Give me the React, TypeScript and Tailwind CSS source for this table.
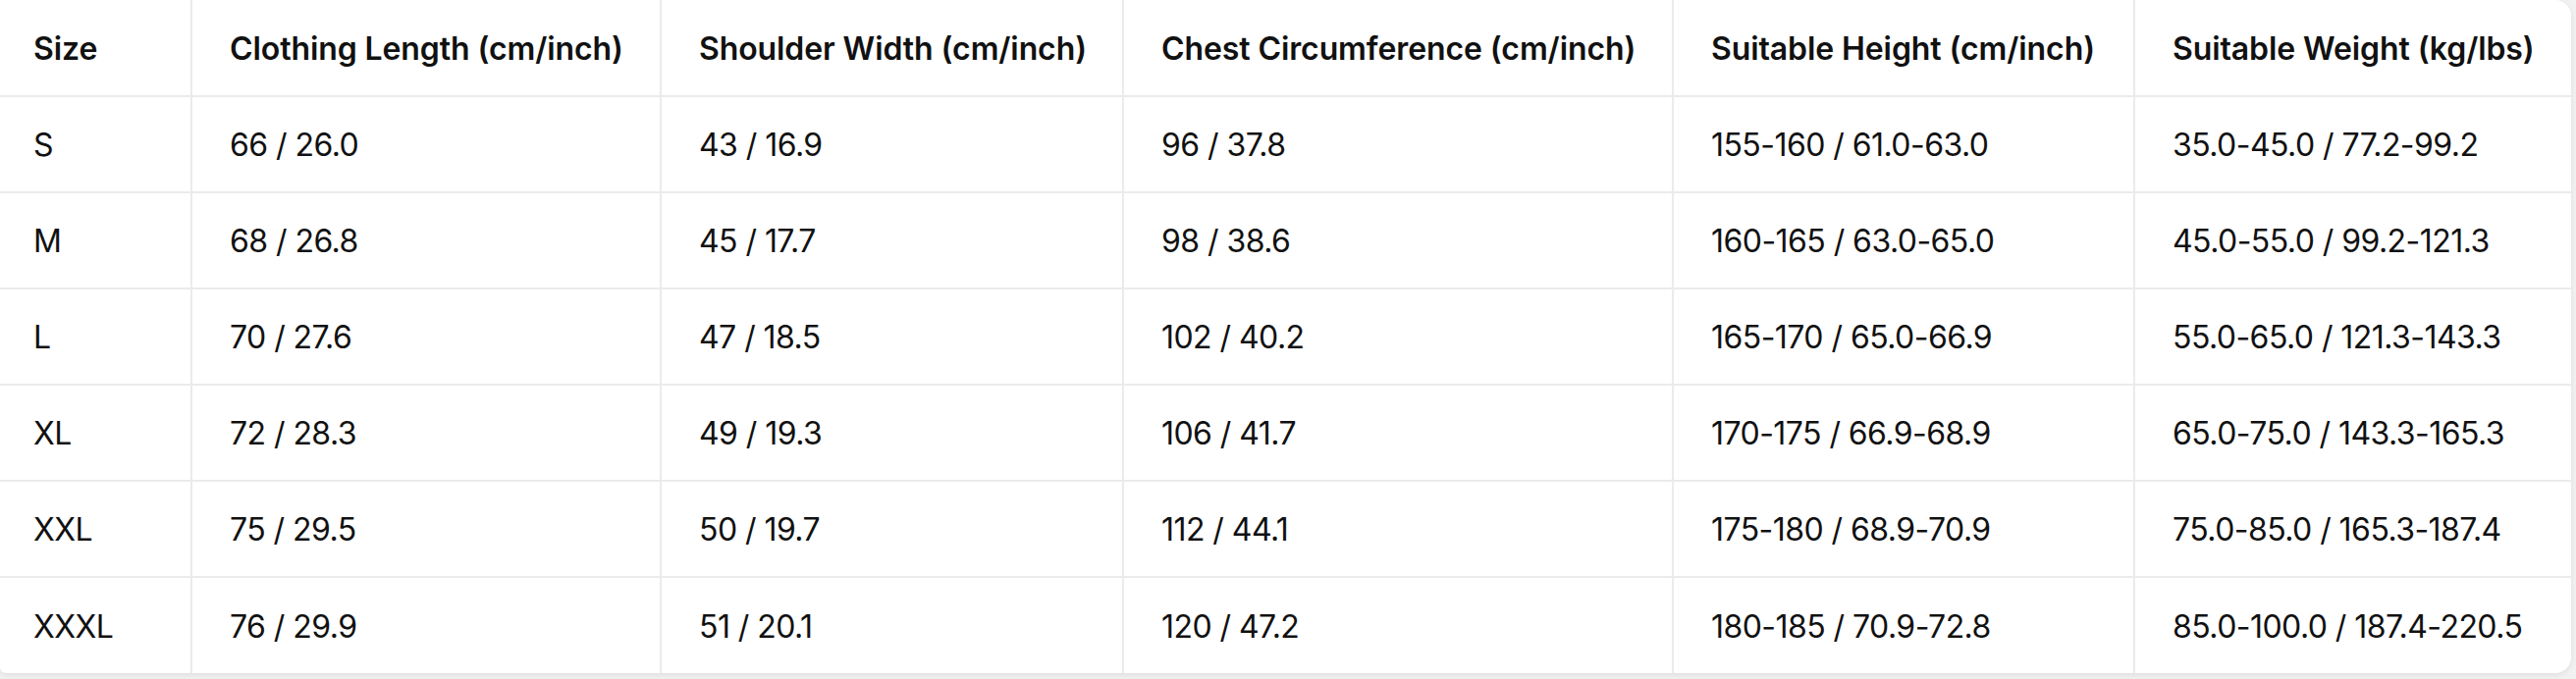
const headers = [
  'Size',
  'Clothing Length (cm/inch)',
  'Shoulder Width (cm/inch)',
  'Chest Circumference (cm/inch)',
  'Suitable Height (cm/inch)',
  'Suitable Weight (kg/lbs)',
];

const rows = [
  ['S', '66 / 26.0', '43 / 16.9', '96 / 37.8', '155-160 / 61.0-63.0', '35.0-45.0 / 77.2-99.2'],
  ['M', '68 / 26.8', '45 / 17.7', '98 / 38.6', '160-165 / 63.0-65.0', '45.0-55.0 / 99.2-121.3'],
  ['L', '70 / 27.6', '47 / 18.5', '102 / 40.2', '165-170 / 65.0-66.9', '55.0-65.0 / 121.3-143.3'],
  ['XL', '72 / 28.3', '49 / 19.3', '106 / 41.7', '170-175 / 66.9-68.9', '65.0-75.0 / 143.3-165.3'],
  ['XXL', '75 / 29.5', '50 / 19.7', '112 / 44.1', '175-180 / 68.9-70.9', '75.0-85.0 / 165.3-187.4'],
  ['XXXL', '76 / 29.9', '51 / 20.1', '120 / 47.2', '180-185 / 70.9-72.8', '85.0-100.0 / 187.4-220.5'],
];

const App = () => {
  return (
    <div className="h-[692px] w-full overflow-hidden bg-[#f1f1f1] font-['Inter','Liberation_Sans',sans-serif] text-[#111111]">
      {/* size chart card */}
      <div className="h-[686px] w-[2619px] overflow-hidden rounded-r-[16px] rounded-bl-[6px] bg-white shadow-[0_2px_6px_rgba(0,0,0,0.08)]">
        <table className="w-full table-fixed border-collapse text-[32px] leading-[40px]">
          <colgroup>
            <col className="w-[195px]" />
            <col className="w-[478px]" />
            <col className="w-[471px]" />
            <col className="w-[560px]" />
            <col className="w-[470px]" />
            <col />
          </colgroup>
          <thead>
            <tr className="h-[98px] border-b-2 border-[#ebebeb]">
              {headers.map((h, i) => (
                <th
                  key={h}
                  className={`border-r-2 border-[#ebebeb] pt-[2px] text-left font-semibold tracking-[-0.1px] last:border-r-0 ${
                    i === 0 ? 'pl-[34px]' : 'pl-[38px]'
                  }`}
                >
                  {h}
                </th>
              ))}
            </tr>
          </thead>
          <tbody>
            {rows.map((r) => (
              <tr key={r[0]} className="h-[98px] border-b-2 border-[#ebebeb] last:border-b-0">
                {r.map((c, i) => (
                  <td
                    key={i}
                    className={`border-r-2 border-[#ebebeb] pt-[2px] font-normal tracking-[-0.55px] last:border-r-0 ${
                      i === 0 ? 'pl-[34px]' : 'pl-[38px]'
                    }`}
                  >
                    {c}
                  </td>
                ))}
              </tr>
            ))}
          </tbody>
        </table>
      </div>
    </div>
  );
};

export default App;
